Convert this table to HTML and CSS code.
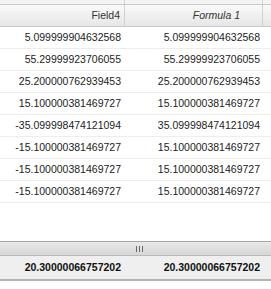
FILE: index.html
```html
<!DOCTYPE html>
<html lang="en">
<head>
    <meta charset="UTF-8">
    <meta name="viewport" content="width=device-width, initial-scale=1.0">
    <title>Grid</title>
    <link rel="stylesheet" href="styles.css">
</head>
<body>
    <div class="grid">
        <!-- strip above the headers -->
        <div class="strip">
            <div class="cell c1"></div>
            <div class="cell c2"></div>
            <div class="cell c3"></div>
        </div>

        <div class="header">
            <div class="cell c1">Field4</div>
            <div class="cell c2 formula">Formula 1</div>
            <div class="cell c3"></div>
        </div>

        <div class="rows">
            <div class="row"><div class="cell c1">5.099999904632568</div><div class="cell c2">5.099999904632568</div></div>
            <div class="row"><div class="cell c1">55.29999923706055</div><div class="cell c2">55.29999923706055</div></div>
            <div class="row"><div class="cell c1">25.200000762939453</div><div class="cell c2">25.200000762939453</div></div>
            <div class="row"><div class="cell c1">15.100000381469727</div><div class="cell c2">15.100000381469727</div></div>
            <div class="row"><div class="cell c1">-35.099998474121094</div><div class="cell c2">35.099998474121094</div></div>
            <div class="row"><div class="cell c1">-15.100000381469727</div><div class="cell c2">15.100000381469727</div></div>
            <div class="row"><div class="cell c1">-15.100000381469727</div><div class="cell c2">15.100000381469727</div></div>
            <div class="row"><div class="cell c1">-15.100000381469727</div><div class="cell c2">15.100000381469727</div></div>
        </div>

        <div class="empty"></div>

        <div class="hscroll">
            <div class="grip"><span></span><span></span><span></span></div>
        </div>

        <div class="summary">
            <div class="cell c1">20.30000066757202</div>
            <div class="cell c2">20.30000066757202</div>
        </div>
    </div>
</body>
</html>
```

FILE: styles.css
```css
* {
    margin: 0;
    padding: 0;
    box-sizing: border-box;
}

body {
    background-color: #fff;
    font-family: 'Liberation Sans', Arial, sans-serif;
    font-size: 10.5px;
    color: #222;
}

.grid {
    width: 271px;
    display: flex;
    flex-direction: column;
}

.cell {
    text-align: right;
    white-space: nowrap;
    overflow: hidden;
}

.c1 {
    width: 125px;
    padding-right: 4px;
}

.c2 {
    width: 138px;
    padding-right: 3px;
}

.c3 {
    flex: 1;
}

.strip {
    display: flex;
    height: 5px;
    background-color: #f4f4f4;
    border-bottom: 1px solid #c9c9c9;
}

.strip .c1,
.strip .c2 {
    border-right: 1px solid #d4d4d4;
}

.header {
    display: flex;
    height: 22px;
    background: linear-gradient(#fafafa, #e6e6e6);
    border-bottom: 1px solid #c9c9c9;
    color: #333;
}

.header .cell {
    line-height: 21px;
}

.header .c1,
.header .c2 {
    border-right: 1px solid #d0d0d0;
}

.header .formula {
    font-style: italic;
    padding-right: 22px;
}

.row {
    display: flex;
    height: 22px;
    border-bottom: 1px solid #ededed;
}

.row .cell {
    line-height: 21px;
}

.empty {
    height: 38px;
}

.hscroll {
    height: 14px;
    background: linear-gradient(#e8e8e8, #d6d6d6);
    border-top: 1px solid #a8a8a8;
    display: flex;
    justify-content: center;
    align-items: center;
}

.grip {
    display: flex;
    gap: 2px;
    margin-left: 7px;
}

.grip span {
    width: 1px;
    height: 6px;
    background-color: #6c6c6c;
}

.summary {
    display: flex;
    height: 26px;
    background-color: #efefef;
    border-top: 1px solid #b9b9b9;
    border-bottom: 2px solid #b3b3b3;
    font-weight: bold;
    color: #111;
}

.summary .cell {
    line-height: 23px;
}
```
